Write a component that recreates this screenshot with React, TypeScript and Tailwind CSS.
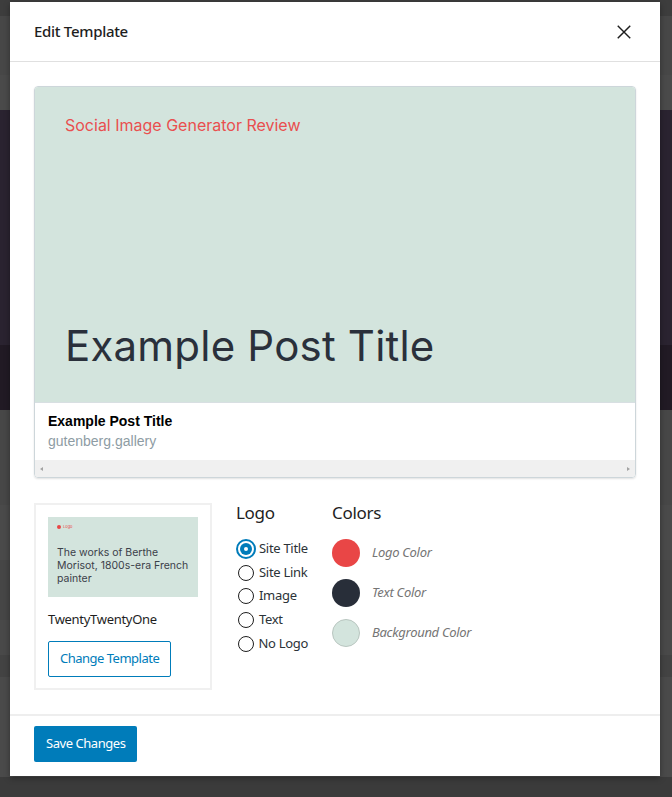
import React, { useState } from 'react';

const ui = "font-['Noto_Sans','Open_Sans',sans-serif]";

const logoOptions = ['Site Title', 'Site Link', 'Image', 'Text', 'No Logo'];

const colorOptions = [
  { label: 'Logo Color', swatch: 'bg-[#e94646]' },
  { label: 'Text Color', swatch: 'bg-[#282e39]' },
  { label: 'Background Color', swatch: 'bg-[#d3e4dd] border border-[#b9c6c0]' },
];

function Radio({ checked }: { checked: boolean }) {
  if (checked) {
    return (
      <span className="w-5 h-5 rounded-full border-2 border-[#007cba] flex items-center justify-center">
        <span className="w-3 h-3 rounded-full bg-[#007cba] flex items-center justify-center">
          <span className="w-1 h-1 rounded-full bg-white" />
        </span>
      </span>
    );
  }
  return (
    <span className="w-5 h-5 flex items-center justify-center">
      <span className="w-4 h-4 rounded-full border border-[#1e1e1e] bg-white" />
    </span>
  );
}

function Backdrop() {
  // page behind the modal, only visible at the edges
  return (
    <div className="flex flex-col h-[797px] bg-[#484848]">
      <div className="h-[16px] bg-[#3d3d3d]" />
      <div className="h-[59px] bg-[#474747]" />
      <div className="h-[35px] bg-[#4a4a4a]" />
      <div className="h-[235px] bg-[#2a2330]" />
      <div className="h-[65px] bg-[#211a24]" />
      <div className="h-[95px] bg-[#474747]" />
      <div className="h-[55px] bg-[#4a4a4a]" />
      <div className="h-[60px] bg-[#464646]" />
      <div className="h-[35px] bg-[#494949]" />
      <div className="h-[22px] bg-[#434343]" />
      <div className="h-[100px] bg-[#4a4a4a]" />
      <div className="flex-1 bg-[#3b3b3b]" />
    </div>
  );
}

export default function App() {
  const [logo, setLogo] = useState('Site Title');

  return (
    <div className={`relative w-[672px] h-[797px] overflow-hidden ${ui}`}>
      <Backdrop />

      {/* Modal */}
      <div className="absolute left-[10px] top-[2px] w-[650px] h-[774px] bg-white shadow-[0_2px_6px_rgba(0,0,0,0.35)] flex flex-col">
        <header className="h-[60px] shrink-0 flex items-center justify-between pl-6 pr-6 border-b border-[#e0e0e0]">
          <h1 className="text-[15px] font-medium text-[#1e1e1e] tracking-[-0.3px]">Edit Template</h1>
          <button className="w-6 h-6 flex items-center justify-center text-[#1e1e1e]">
            <svg width="20" height="20" viewBox="0 0 24 24" fill="none" stroke="currentColor" strokeWidth="1.7">
              <path d="M4.5 4.5l15 15M19.5 4.5l-15 15" />
            </svg>
          </button>
        </header>

        <div className="flex-1 px-6 pt-6 pb-6">
          {/* Preview card */}
          <div className="rounded-[4px] border border-[#cdd6da] shadow-[0_1px_2px_rgba(0,0,0,0.12)] overflow-hidden">
            <div className="h-[315px] bg-[#d3e4dd] flex flex-col justify-between px-[30px] pt-[28px] pb-[35px] font-['Inter',sans-serif]">
              <p className="text-[16px] text-[#e94f4f] leading-5">Social Image Generator Review</p>
              <p className="text-[42px] text-[#2a303b] leading-none tracking-[0.2px]">Example Post Title</p>
            </div>
            <div className="px-[13px] pt-[9px] pb-[10px] border-t border-[#d8dfe2] font-['Liberation_Sans',Arial,sans-serif]">
              <p className="text-[14px] font-bold text-black leading-[18px]">Example Post Title</p>
              <p className="text-[14px] text-[#8e9ca4] leading-[18px] mt-[2px]">gutenberg.gallery</p>
            </div>
            <div className="h-[17px] bg-[#f0f0f0] flex items-center justify-between px-[4px]">
              <svg width="6" height="6" viewBox="0 0 6 6"><path d="M4 1L1 3l3 2z" fill="#a3a3a3" /></svg>
              <svg width="6" height="6" viewBox="0 0 6 6"><path d="M2 1l3 2-3 2z" fill="#a3a3a3" /></svg>
            </div>
          </div>

          {/* Settings */}
          <div className="flex mt-[25px]">
            <div className="w-[178px] h-[187px] border-2 border-[#f0f0f0] px-[12px] pt-[12px]">
              <div className="h-[80px] w-[150px] bg-[#d3e4dd] px-[9px] pt-[8px] font-['Inter',sans-serif]">
                <div className="flex items-center gap-[2px]">
                  <span className="w-[4px] h-[4px] rounded-full bg-[#e94646]" />
                  <span className="text-[4px] text-[#e94646] leading-none">Logo</span>
                </div>
                <p className="mt-[17px] text-[10.5px] leading-[13px] text-[#3b4049]">The works of Berthe Morisot, 1800s-era French painter</p>
              </div>
              <p className="mt-[14px] text-[13px] text-[#1e1e1e] leading-4 tracking-[-0.3px]">TwentyTwentyOne</p>
              <button className="mt-[14px] h-[36px] px-[11px] border border-[#007cba] rounded-[2px] text-[13px] text-[#007cba] tracking-[-0.5px]">Change Template</button>
            </div>

            <div className="ml-[24px] w-[72px]">
              <h2 className="text-[17px] text-[#1e1e1e] leading-5 tracking-[-0.3px]">Logo</h2>
              <div className="mt-[14px] flex flex-col">
                {logoOptions.map((o) => (
                  <label key={o} className="flex items-center h-[23.7px] gap-[3px] cursor-pointer" onClick={() => setLogo(o)}>
                    <Radio checked={logo === o} />
                    <span className="text-[13px] text-[#2c3338] whitespace-nowrap tracking-[-0.3px]">{o}</span>
                  </label>
                ))}
              </div>
            </div>

            <div className="ml-[24px]">
              <h2 className="text-[17px] text-[#1e1e1e] leading-5 tracking-[-0.3px]">Colors</h2>
              <div className="mt-[16px] flex flex-col gap-[12px]">
                {colorOptions.map((c) => (
                  <div key={c.label} className="flex items-center gap-[12px]">
                    <span className={`w-[28px] h-[28px] rounded-full ${c.swatch}`} />
                    <span className="text-[13px] italic text-[#757575] tracking-[-0.3px]">{c.label}</span>
                  </div>
                ))}
              </div>
            </div>
          </div>
        </div>

        <footer className="h-[62px] shrink-0 border-t-2 border-[#eeeeee] px-6 pt-[10px]">
          <button className="h-[36px] px-[12px] bg-[#007cba] rounded-[2px] text-[13px] text-white tracking-[-0.45px]">Save Changes</button>
        </footer>
      </div>
    </div>
  );
}
